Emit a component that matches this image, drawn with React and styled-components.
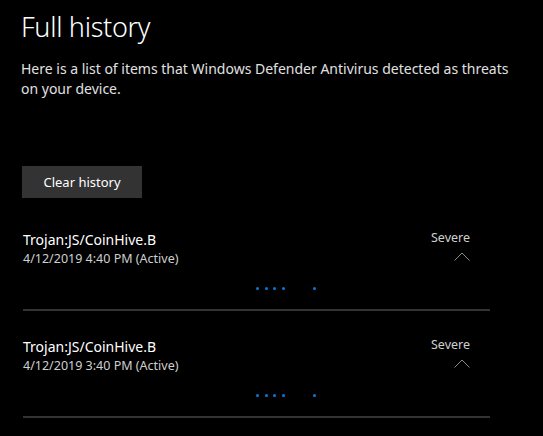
import React from 'react'
import styled, { createGlobalStyle } from 'styled-components'

const GlobalStyle = createGlobalStyle`
  html, body {
    margin: 0;
    padding: 0;
    background: #000;
  }
  body {
    font-family: "Noto Sans", "Open Sans", "Liberation Sans", sans-serif;
    color: #fff;
  }
`;

const threats = [
  { name: 'Trojan:JS/CoinHive.B', date: '4/12/2019 4:40 PM (Active)', level: 'Severe' },
  { name: 'Trojan:JS/CoinHive.B', date: '4/12/2019 3:40 PM (Active)', level: 'Severe' },
]

function Chevron() {
  return (
    <svg width="16" height="9" viewBox="0 0 16 9">
      <polyline points="0.5,8.5 8,1 15.5,8.5" fill="none" stroke="#8a8a8a" strokeWidth="1" />
    </svg>
  )
}

function Dots() {
  return (
    <DotRow>
      <Dot />
      <Dot />
      <Dot />
      <Dot />
      <Dot $far />
    </DotRow>
  )
}

function App() {
  return (
    <Page>
      <GlobalStyle />
      <Title>Full history</Title>
      <Description>
        Here is a list of items that Windows Defender Antivirus detected as threats on your device.
      </Description>
      <ClearButton>Clear history</ClearButton>
      <List>
        {threats.map((t, i) => (
          <Item key={i}>
            <Header>
              <Info>
                <Name>{t.name}</Name>
                <Date>{t.date}</Date>
              </Info>
              <Severity>
                <Level>{t.level}</Level>
                <Chevron />
              </Severity>
            </Header>
            <Dots />
          </Item>
        ))}
      </List>
    </Page>
  )
}

const Page = styled.div`
  width: 543px;
  height: 436px;
  box-sizing: border-box;
  padding: 8px 0 0 21px;
  overflow: hidden;
  background: #000;
`;

const Title = styled.h1`
  margin: 0;
  font-size: 27px;
  font-weight: 300;
  line-height: 38px;
  letter-spacing: -0.3px;
  color: #fff;
`;

const Description = styled.p`
  margin: 13px 0 0 0;
  width: 500px;
  font-size: 14px;
  line-height: 20px;
  color: #e0e0e0;
`;

const ClearButton = styled.button`
  margin: 67px 0 0 1px;
  width: 120px;
  height: 32px;
  border: none;
  background: #333;
  color: #fff;
  font-family: inherit;
  font-size: 13px;
  padding: 0;
`;

const List = styled.div`
  margin-top: 26px;
  width: 467px;
  margin-left: 2px;
  display: flex;
  flex-direction: column;
  gap: 20px;
`;

const Item = styled.div`
  border-bottom: 2px solid #333;
  height: 87px;
  box-sizing: border-box;
`;

const Header = styled.div`
  display: flex;
  justify-content: space-between;
  align-items: flex-start;
  padding-top: 6px;
`;

const Info = styled.div`
  display: flex;
  flex-direction: column;
`;

const Name = styled.div`
  font-size: 14px;
  line-height: 20px;
  color: #fff;
`;

const Date = styled.div`
  font-size: 12.5px;
  line-height: 18px;
  color: #cfcfcf;
`;

const Severity = styled.div`
  display: flex;
  flex-direction: column;
  align-items: flex-end;
  padding-right: 20px;
  margin-top: -1px;
  gap: 5px;
`;

const Level = styled.div`
  font-size: 12.5px;
  line-height: 18px;
  color: #d0d0d0;
`;

const DotRow = styled.div`
  display: flex;
  align-items: center;
  gap: 5.5px;
  padding-left: 233px;
  margin-top: 19px;
`;

const Dot = styled.span`
  width: 3px;
  height: 3px;
  border-radius: 50%;
  background: #0a78d7;
  margin-left: ${p => (p.$far ? '23px' : '0')};
`;

export default App
